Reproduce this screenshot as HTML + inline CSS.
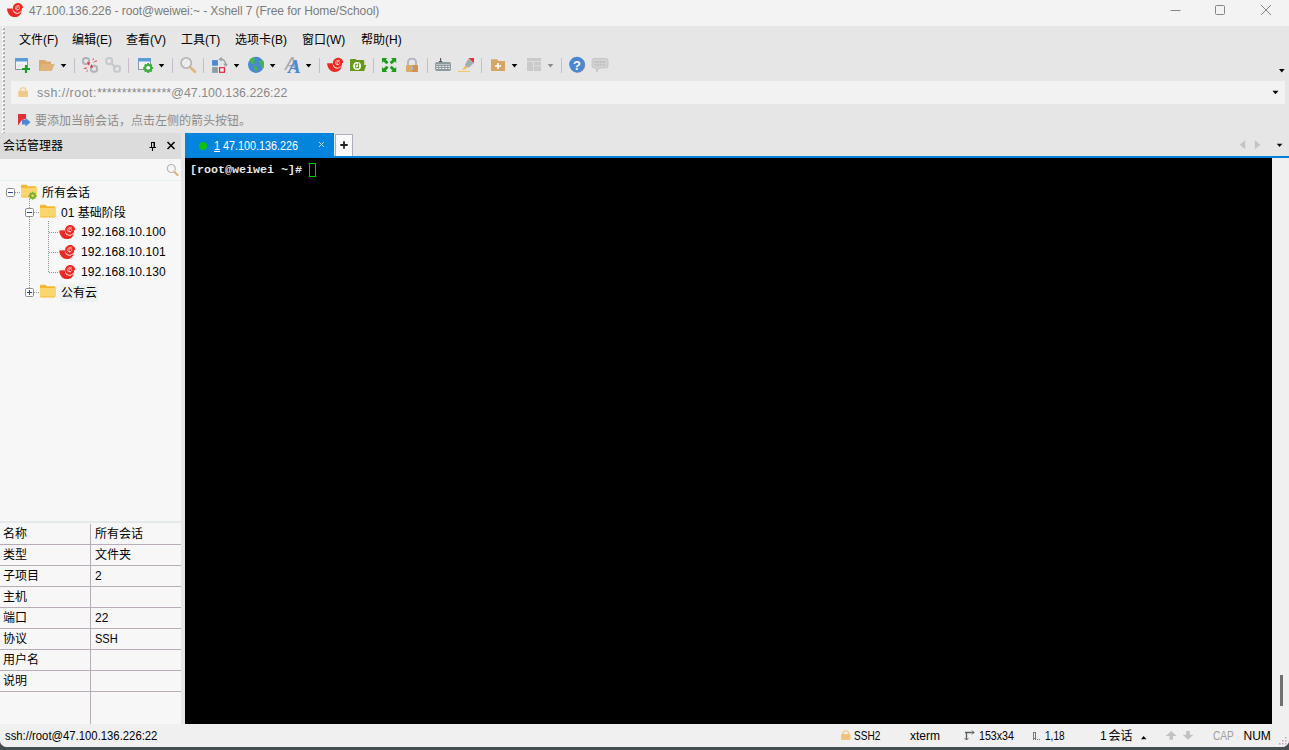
<!DOCTYPE html>
<html lang="zh-CN">
<head>
<meta charset="utf-8">
<title>47.100.136.226 - root@weiwei:~ - Xshell 7 (Free for Home/School)</title>
<style>
*{box-sizing:border-box;margin:0;padding:0}
html,body{width:1289px;height:750px;overflow:hidden;background:#454e53;}
body{font-family:"Liberation Sans","Noto Sans CJK SC",sans-serif;font-size:12px;color:#000;position:relative}
.abs{position:absolute}
#win{position:absolute;left:0;top:0;width:1289px;height:747px;background:#e6e6e6;border-radius:0 0 7px 7px;overflow:hidden}
#title{left:0;top:0;width:1289px;height:26px;background:#f3f3f3}
#title .txt{left:29px;top:3px;font-size:12px;letter-spacing:-0.08px;color:#7c7c7c;line-height:16px;white-space:nowrap}
#menu{left:0;top:26px;width:1289px;height:26px}
#menu span{position:absolute;top:5.500px;line-height:16px;font-size:12px;white-space:nowrap}
#tool{left:0;top:52px;width:1289px;height:28px}
#addr{left:11px;top:81px;width:1274px;height:23px;background:#f2f2f2}
#addr .txt{left:26px;top:4px;font-size:12.4px;color:#8a8a8a;line-height:16px;white-space:nowrap}
#hint{left:0;top:106px;width:1289px;height:27px}
#hint .txt{left:35px;top:7px;font-size:12px;color:#8c8c8c;line-height:16px;white-space:nowrap}
#grip{left:2px;top:27px}
#smhead{left:0;top:133px;width:181px;height:26.400px;background:#dcdcdc}
#smhead .txt{left:3px;top:5px;font-size:12px;line-height:16px}
#left{left:0;top:159px;width:181px;height:565px;background:#f7f7f7}
#split{left:181px;top:133px;width:4px;height:591px;background:#e6e6e6}
#search{left:0;top:159.400px;width:181px;height:22px;background:#f7f7f7;border-bottom:1px dotted #dce8ec}
.tree{position:absolute;white-space:nowrap;font-size:12px;line-height:16px}
#tabs{left:185px;top:133px;width:1104px;height:25px}
#tab1{left:0;top:0;width:149px;height:24px;background:#0584de;color:#fff}
#tab1 .txt{left:28.800px;top:4.500px;font-size:12.600px;line-height:16px;white-space:nowrap;transform-origin:0 50%;transform:scaleX(0.856)}
#plus{left:150px;top:1px;width:18px;height:23px;background:#fafafa;border:1px solid #b4acbc;border-bottom:none}
#tabline{left:185px;top:156px;width:1104px;height:2px;background:#0580d8}
#term{left:185px;top:158px;width:1087px;height:566px;background:#000}
#term .txt{left:5px;top:4px;color:#e8e8e8;font-family:"Liberation Mono","DejaVu Sans Mono",monospace;font-weight:bold;font-size:11.667px;line-height:16px;white-space:pre}
#cursor{left:124px;top:5px;width:7px;height:14px;border:1px solid #00d000}
#vscroll{left:1272px;top:158px;width:17px;height:566px;background:#f0f0f0}
#thumb{left:8px;top:517px;width:2.500px;height:31px;background:#707070}
#props{left:0;top:521px;width:181px;height:203px;background:#f7f7f7;border-top:2.500px solid #e4e9e9}
.prow{position:absolute;left:0;width:181px;height:21px;border-bottom:1px solid #b8acb8}
.prow span{position:absolute;top:2px;line-height:16px;font-size:12px;white-space:nowrap}
#pcol{left:90px;top:524px;width:1px;height:200px;background:#b8acb8}
#status{left:0;top:724px;width:1289px;height:23px;background:#f0f0f0}
#status span{position:absolute;transform-origin:0 50%;top:4px;line-height:16px;font-size:12px;white-space:nowrap}
</style>
</head>
<body>
<svg width="0" height="0" style="position:absolute"><defs>
<g id="logo">
<path d="M0 5.500 L5.700 5.400 C5.400 8.500 7.500 10.900 10.500 10.700 C12.500 10.600 13.800 9.500 14.400 8.300 C14.500 11.500 11.500 14.200 7.800 14.200 C3.200 14.200 0.200 10.200 0 5.500 Z" fill="#ea2a22"/>
<path d="M11 0 C14 0 16.200 2.300 16.100 5.300 L14.900 5.100 C15.200 8 13.300 10.200 10.800 10.200 C8 10.200 5.900 8 5.900 5.100 C5.900 2.300 8.200 0 11 0 Z" fill="#ea2a22"/>
<path d="M11.300 6.700 A1.500 1.500 0 1 1 12.600 5.200 A2.300 2.300 0 0 1 8.700 6.300 A2.600 2.600 0 0 1 12.800 3.200" fill="none" stroke="#fff" stroke-opacity="0.850" stroke-width="0.700"/>
<path d="M6.200 7.400 C7.200 10.200 11.200 11.200 14 8.400" fill="none" stroke="#fff" stroke-opacity="0.750" stroke-width="0.700"/>
</g></defs></svg>
<div id="win">
  <div id="title" class="abs">
    <svg class="abs" style="left:7px;top:2.800px" width="16" height="14.500" viewBox="0 0 16 14.500"><use href="#logo"/></svg>
    <div class="abs txt">47.100.136.226 - root@weiwei:~ - Xshell 7 (Free for Home/School)</div>
    <svg class="abs" style="left:1160px;top:0" width="129" height="26" viewBox="0 0 129 26">
      <path d="M10.500 10.500 H20.500" stroke="#858585" stroke-width="1" fill="none"/>
      <rect x="55.500" y="5.500" width="9" height="9" rx="1" stroke="#858585" stroke-width="1" fill="none"/>
      <path d="M101 5 L111 15 M111 5 L101 15" stroke="#858585" stroke-width="1" fill="none"/>
    </svg>
  </div>
  <div id="menu" class="abs">
    <span style="left:19px">文件(F)</span>
    <span style="left:72px">编辑(E)</span>
    <span style="left:126px">查看(V)</span>
    <span style="left:181px">工具(T)</span>
    <span style="left:235px">选项卡(B)</span>
    <span style="left:302px">窗口(W)</span>
    <span style="left:361px">帮助(H)</span>
  </div>
  <svg id="grip" class="abs" width="4" height="106" viewBox="0 0 4 106"><defs><pattern id="gp" width="4" height="4" patternUnits="userSpaceOnUse"><rect x="0" y="0" width="2" height="2" fill="#fff"/><rect x="1" y="1" width="2" height="2" fill="#b0b0b0"/></pattern></defs><rect width="4" height="106" fill="url(#gp)"/></svg>
  <div id="tool" class="abs"><svg class="abs" style="left:0;top:0" width="1289" height="28" viewBox="0 52 1289 28">
<defs>
<path id="dd" d="M0 0 H5.600 L2.800 3.400 Z"/>
<path id="sep" d="M0.500 58 V73" stroke="#c6bcca" stroke-width="1" fill="none"/>
</defs>
<!-- new session -->
<rect x="15.500" y="58.500" width="12" height="11" fill="#f2f2f2" stroke="#8a96a2"/>
<rect x="15" y="58" width="13" height="3.500" fill="#5b9bd8"/>
<path d="M18 67 L20 64 M21 67 L23 64" stroke="#d0d0d0" stroke-width="0.800"/>
<path d="M26 65 V73 M22 69 H30" stroke="#18a020" stroke-width="2.200" fill="none"/>
<!-- open folder -->
<path d="M39 60 H45 L46.500 61.500 H51 V64 H54.500 L51.500 71 H39 Z" fill="#d9aa6c"/>
<path d="M39 71 L42 64 H54.500 L51.500 71 Z" fill="#dfb47a"/>
<use href="#dd" x="60.700" y="64" fill="#000"/>
<use href="#sep" x="74"/>
<!-- disconnect -->
<g fill="none" stroke="#a4a8ae" stroke-width="2" stroke-opacity="0.850">
<rect x="83" y="58" width="6" height="6" rx="2.500"/>
<rect x="91" y="65.800" width="6" height="6" rx="2.500"/>
</g>
<g fill="#e53a44">
<path d="M86.800 62 L90 62.300 L89 66 Z"/><path d="M90 67.600 L91.500 64 L93.200 67.800 Z"/>
<path d="M92 60.500 L93.500 57.800 L94 59.500 Z" opacity="0.850"/><path d="M92.500 62.800 L96.500 60 L97 61.500 Z" opacity="0.850"/>
<path d="M83 68.500 L87.300 67 L86 69.300 Z" opacity="0.850"/><path d="M86 71.800 L88 69.200 L87.500 71.500 Z" opacity="0.850"/>
</g>
<!-- connect disabled -->
<g fill="none" stroke="#c6c9cc" stroke-width="2">
<rect x="106.200" y="58" width="6" height="6" rx="2.500"/>
<rect x="114" y="65.800" width="6" height="6" rx="2.500"/>
<path d="M110.500 62.500 L116 68" stroke-width="2.400"/>
</g>
<use href="#sep" x="128"/>
<!-- session properties -->
<rect x="138.500" y="58.500" width="12" height="11" fill="#f2f2f2" stroke="#8a96a2"/>
<rect x="138" y="58" width="13" height="3.500" fill="#5b9bd8"/>
<g transform="translate(148.200 68)">
<circle r="3" fill="none" stroke="#3cae3c" stroke-width="2"/>
<g stroke="#3cae3c" stroke-width="2"><path d="M0 -5 V-3 M0 3 V5 M-5 0 H-3 M3 0 H5 M-3.500 -3.500 L-2.200 -2.200 M3.500 3.500 L2.200 2.200 M-3.500 3.500 L-2.200 2.200 M3.500 -3.500 L2.200 -2.200"/></g>
<circle r="1.600" fill="#f4f4f4"/>
</g>
<use href="#dd" x="158.700" y="64" fill="#000"/>
<use href="#sep" x="172"/>
<!-- magnifier -->
<path d="M191 68 L195 71.800" stroke="#e4b476" stroke-width="2.600" stroke-linecap="round"/>
<circle cx="186.200" cy="63" r="5.100" fill="#efefef" stroke="#b6b6b6" stroke-width="1.800"/>
<path d="M184 65.500 L187.500 60" stroke="#dcdcdc" stroke-width="0.800"/>
<use href="#sep" x="203"/>
<!-- layout -->
<rect x="212.100" y="60.100" width="5.800" height="5.600" fill="#4a88d4"/>
<rect x="212.100" y="67.100" width="5.800" height="5.800" fill="#909ca4"/>
<rect x="219.600" y="67.700" width="4.800" height="4.600" fill="#ececec" stroke="#e0283c" stroke-width="1.200"/>
<path d="M220.500 59.300 C223.500 59 225.500 61 225.600 64.500" fill="none" stroke="#98a4a8" stroke-width="1.400"/>
<path d="M223 63.800 H228 L225.600 66.700 Z" fill="#98a4a8"/>
<path d="M218.300 59.300 L221.800 57 L221.800 61.600 Z" fill="#98a4a8"/>
<use href="#dd" x="233.700" y="64" fill="#000"/>
<!-- globe -->
<circle cx="256.050" cy="64.850" r="8.050" fill="#4a88d4"/>
<path d="M249.800 59.500 C251 57.800 254 57.300 255.300 58 C255.800 59.500 253.800 60.500 254.500 62.500 C255 63.800 254 65 252.800 64.300 C251 63.300 249.800 61.500 249.800 59.500 Z" fill="#44b450"/>
<path d="M253.500 66 C255.500 65.500 258 66.800 257.600 68.500 C257.200 70.300 256.300 72 255.300 71.300 C254.500 70.500 255 69 254 68 C253.300 67.300 253 66.500 253.500 66 Z" fill="#44b450"/>
<path d="M258.800 61.300 C260 60 262.500 59.800 263.300 60.800 C264.200 62.500 264.300 65.500 263.300 67.300 C262.500 68.800 261.300 68.300 261.200 66.800 C261 65 260.500 64.500 259.500 63.500 C258.800 62.800 258.300 62 258.800 61.300 Z" fill="#44b450"/>
<use href="#dd" x="269.800" y="64" fill="#000"/>
<!-- font -->
<text x="285" y="69.800" font-family="Liberation Sans,sans-serif" font-style="italic" font-size="17.700" fill="#a4a8ac">A</text>
<text x="288" y="72.900" font-family="Liberation Serif,serif" font-style="italic" font-weight="bold" font-size="19" fill="#4a88d4">A</text>
<use href="#dd" x="305.800" y="64" fill="#000"/>
<use href="#sep" x="319"/>
<!-- xshell logo -->
<use href="#logo" x="327.100" y="57.800"/>
<!-- xftp folder -->
<path d="M350 59.800 Q350 59 350.800 59 H355.500 L356.800 60 H363.500 Q364.200 60 364.200 60.800 V65 H366.300 L364.200 71 H350 Z" fill="#67981a"/>
<circle cx="357.100" cy="65.900" r="3.900" fill="#fff"/>
<path d="M355.800 68.500 V64.200 H357.600 M358.600 63.300 V67.600 H356.800" fill="none" stroke="#67981a" stroke-width="1.100"/>
<use href="#sep" x="373"/>
<!-- fullscreen -->
<g fill="#1c9a1e">
<path d="M382 58 H387.200 L385.700 59.500 L388.500 62.300 L386.500 64.300 L383.500 61.500 L382 63 Z"/>
<path d="M396.200 58 H391 L392.500 59.500 L389.700 62.300 L391.700 64.300 L394.700 61.500 L396.200 63 Z"/>
<path d="M382 72 H387.200 L385.700 70.500 L388.500 67.700 L386.500 65.700 L383.500 68.500 L382 67 Z"/>
<path d="M396.200 72 H391 L392.500 70.500 L389.700 67.700 L391.700 65.700 L394.700 68.500 L396.200 67 Z"/>
</g>
<!-- lock -->
<path d="M408 65.500 V62.500 C408 57.300 416 57.300 416 62.500 V65.500" fill="none" stroke="#b0b4c4" stroke-width="1.900"/>
<rect x="406" y="64.900" width="12" height="7.100" rx="1" fill="#dba968"/>
<path d="M412 64.900 H417 Q418 64.900 418 65.900 V71 Q418 72 417 72 H412 Z" fill="#d0924c"/>
<rect x="411" y="66" width="2" height="4" fill="#a8b8d0"/>
<use href="#sep" x="427"/>
<!-- keyboard -->
<path d="M440.600 58 V62 M439 61.600 H442.200" stroke="#505458" stroke-width="1.100"/>
<rect x="435.100" y="62.100" width="15.900" height="8.900" rx="1.800" fill="#8a9a9e"/>
<path d="M436.500 64.500 H450" stroke="#f2e6e6" stroke-width="1" stroke-dasharray="1 1"/>
<path d="M436.200 66.500 H450.500 M436.200 68.500 H450.500" stroke="#f2e6e6" stroke-width="1" stroke-dasharray="2 1"/>
<!-- highlighter -->
<path d="M458 71.500 H470" stroke="#f0c868" stroke-width="1.100"/>
<path d="M465.300 65.200 L468 67.300 L465 69.600 L462 69.800 Z" fill="#f0c060"/>
<path d="M468.500 58.500 L473.600 63.300 L469 67.600 L465.800 66.200 L465 64.500 Z" fill="#a4acb4"/>
<path d="M468.500 58 H474 V63.200 Z" fill="#e0303a"/>
<use href="#sep" x="481"/>
<!-- folder plus -->
<path d="M491 59.300 H497 L498.500 61 H505 V71 H491 Z" fill="#d9a564"/>
<path d="M498 63 V69 M495 66 H501" stroke="#fff" stroke-width="1.700"/>
<use href="#dd" x="511.700" y="64" fill="#000"/>
<!-- disabled layout -->
<rect x="527" y="58" width="14" height="13" fill="#cacaca"/>
<path d="M527 61.500 H541 M533.500 61.500 V71 M533.500 66 H541" stroke="#dedede" stroke-width="1"/>
<use href="#dd" x="547.700" y="64" fill="#8c8890"/>
<use href="#sep" x="561"/>
<!-- help -->
<circle cx="577.600" cy="65.200" r="7.600" fill="#9098a8"/>
<circle cx="577" cy="64.600" r="7.800" fill="#4a86d2"/>
<text x="577" y="69.500" text-anchor="middle" font-family="Liberation Sans,sans-serif" font-weight="bold" font-size="13" fill="#fff">?</text>
<!-- chat -->
<path d="M594 58.500 H606 Q608 58.500 608 60.500 V66 Q608 68 606 68 H599.500 L596.500 72 V68 H594 Q592 68 592 66 V60.500 Q592 58.500 594 58.500 Z" fill="#d2d2d2" stroke="#c0c0c0" stroke-width="0.800"/>
<path d="M594.500 62 H605.500 M594.500 64.800 H605.500" stroke="#bcbcbc" stroke-width="1.300" stroke-dasharray="2 0.800"/>
<!-- overflow -->
<path d="M1279 69 H1284.600 L1281.800 72.400 Z" fill="#000"/>
</svg>
</div>
  <div id="addr" class="abs">
<svg class="abs" style="left:0;top:0" width="1274" height="23" viewBox="11 81 1274 23">
<path d="M20.300 92 V90.500 C20.300 86.800 25.900 86.800 25.900 90.500 V92" fill="none" stroke="#f0d498" stroke-width="1.500"/>
<rect x="18.200" y="90.800" width="9.800" height="6.200" rx="1" fill="#f0cc88"/>
<path d="M20.300 93 H21.500 M22.500 94.500 H23.700 M24.700 93 H25.900" stroke="#e8b0a0" stroke-width="1"/>
<path d="M1272.500 90.800 H1278.500 L1275.500 94.200 Z" fill="#000"/>
</svg>
    <div class="abs txt"><span style="letter-spacing:0.500px">ssh://root:</span><span style="letter-spacing:0.140px">***************</span><span>@47.100.136.226:22</span></div>
  </div>
  <div id="hint" class="abs">
<svg class="abs" style="left:0;top:0" width="40" height="27" viewBox="0 106 40 27">
<path d="M18 114 H26 V119 L22 120 L18 125.500 Z" fill="#e0303c"/>
<path d="M22 120 H25.500 V117.800 L30.500 122.200 L25.500 126.600 V124.400 H22 Z" fill="#4a88d4"/>
</svg>
    <div class="abs txt">要添加当前会话，点击左侧的箭头按钮。</div>
  </div>
  <div id="smhead" class="abs">
<svg class="abs" style="left:0;top:0" width="182" height="24" viewBox="0 133 182 24">
<path d="M151 142.500 H155 M151.500 142.500 V147 M154.500 142 V147.500" stroke="#000" stroke-width="1" fill="none"/><path d="M153.500 142 H155 V147 H153.500 Z" fill="#000"/><path d="M149.500 147.500 H156 M152.500 148 V151" stroke="#000" stroke-width="1.100" fill="none"/>
<path d="M167.500 142 L174.500 149 M174.500 142 L167.500 149" stroke="#000" stroke-width="1.500" fill="none"/>
</svg><div class="abs txt">会话管理器</div></div>
  <div id="left" class="abs"></div>
  <div id="search" class="abs"><svg class="abs" style="left:166px;top:3.600px" width="14" height="14" viewBox="0 0 14 14"><path d="M7.500 8 L11.500 12" stroke="#e0b070" stroke-width="2" stroke-linecap="round"/><circle cx="5.300" cy="5.500" r="4" fill="#f4f4f4" stroke="#b8b8b8" stroke-width="1.200"/></svg></div>
  <div id="tree"><svg class="abs" style="left:0;top:182px" width="182" height="120" viewBox="0 182 182 120">
<defs>
<g id="fold"><path d="M0 2.700 Q0 1.500 1.200 1.500 H5.500 L7 3 H14.300 Q15.500 3 15.500 4.200 V12.800 Q15.500 14 14.300 14 H1.200 Q0 14 0 12.800 Z" fill="#f2b830"/><path d="M0 4.800 H15.500 V12.800 Q15.500 14 14.300 14 H1.200 Q0 14 0 12.800 Z" fill="#fbd56e"/><path d="M0.500 13.500 H15" stroke="#f4c44c" stroke-width="1" fill="none"/></g>
<g id="xs"><use href="#logo"/></g>
<g id="bx"><rect x="0.500" y="0.500" width="8" height="8" rx="1.300" fill="#fff" stroke="#8e8e92"/><path d="M2 4.500 H7" stroke="#3040a0" stroke-width="1"/></g>
</defs>
<g stroke="#909090" stroke-width="1" stroke-dasharray="1 1" fill="none">
<path d="M15 192.500 H21"/><path d="M29.500 199 V292"/><path d="M34 212.500 H40"/><path d="M34 292.500 H40"/>
<path d="M48.500 221 V272"/><path d="M49 232.500 H59"/><path d="M49 252.500 H59"/><path d="M49 272.500 H59"/>
</g>
<use href="#bx" x="6" y="188"/>
<use href="#bx" x="25" y="208"/>
<use href="#bx" x="25" y="288"/><path d="M29.500 290 V295" stroke="#3040a0" stroke-width="1"/>
<use href="#fold" x="21" y="183.300"/>
<g transform="translate(32.600 195.700)"><circle r="2.300" fill="none" stroke="#78b232" stroke-width="1.800"/><path d="M0 -4 V4 M-4 0 H4 M-2.800 -2.800 L2.800 2.800 M-2.800 2.800 L2.800 -2.800" stroke="#78b232" stroke-width="1.400"/><circle r="1.200" fill="#fbd968"/></g>
<use href="#fold" x="40" y="203.300"/>
<use href="#fold" x="40" y="283.300"/>
<use href="#xs" x="59.200" y="224.900"/>
<use href="#xs" x="59.200" y="244.900"/>
<use href="#xs" x="59.200" y="264.900"/>
</svg>
<div class="tree" style="left:42px;top:184.5px">所有会话</div>
<div class="tree" style="left:61px;top:204.5px">01 基础阶段</div>
<div class="tree" style="left:81px;top:223.5px;letter-spacing:0.100px">192.168.10.100</div>
<div class="tree" style="left:81px;top:243.5px;letter-spacing:0.100px">192.168.10.101</div>
<div class="tree" style="left:81px;top:263.5px;letter-spacing:0.100px">192.168.10.130</div>
<div class="abs" style="left:60px;top:284px;width:38px;height:18px;background:#eef1f1"></div><div class="tree" style="left:61px;top:284.5px">公有云</div></div>
  <div id="props" class="abs"></div>
  <div id="proprows"><div class="prow" style="top:524px"><span style="left:3px">名称</span><span style="left:95px">所有会话</span></div>
<div class="prow" style="top:545px"><span style="left:3px">类型</span><span style="left:95px">文件夹</span></div>
<div class="prow" style="top:566px"><span style="left:3px">子项目</span><span style="left:95px">2</span></div>
<div class="prow" style="top:587px"><span style="left:3px">主机</span><span style="left:95px"></span></div>
<div class="prow" style="top:608px"><span style="left:3px">端口</span><span style="left:95px">22</span></div>
<div class="prow" style="top:629px"><span style="left:3px">协议</span><span style="left:95px;transform:scaleX(0.920);transform-origin:0 50%">SSH</span></div>
<div class="prow" style="top:650px"><span style="left:3px">用户名</span><span style="left:95px"></span></div>
<div class="prow" style="top:671px"><span style="left:3px">说明</span><span style="left:95px"></span></div></div>
  <div id="pcol" class="abs"></div>
  <div id="split" class="abs"></div>
  <div id="tabs" class="abs">
<svg class="abs" style="left:1050px;top:0" width="54" height="25" viewBox="1235 133 54 25">
<path d="M1245.200 140.200 V149.200 L1239.700 144.700 Z" fill="#c4c4c4"/>
<path d="M1254.900 140.200 V149.200 L1260.400 144.700 Z" fill="#c4c4c4"/>
<path d="M1276.800 143.700 H1282.400 L1279.600 147 Z" fill="#000"/>
</svg>
    <div id="tab1" class="abs">
      <div class="abs" style="left:14px;top:9px;width:8px;height:8px;border-radius:4px;background:#10c010"></div>
      <div class="abs txt"><u>1</u> 47.100.136.226</div>
      <svg class="abs" style="left:133px;top:8px" width="7" height="7" viewBox="0 0 7 7"><path d="M1 1 L6 6 M6 1 L1 6" stroke="#b8dcf8" stroke-width="1"/></svg>
    </div>
    <div id="plus" class="abs"><svg class="abs" style="left:4px;top:6px" width="8" height="8" viewBox="0 0 8 8"><path d="M4 0.300 V7.700 M0.300 4 H7.700" stroke="#222" stroke-width="1.800"/></svg></div>
  </div>
  <div id="tabline" class="abs"></div>
  <div id="term" class="abs">
    <div class="abs txt">[root@weiwei ~]# </div>
    <div id="cursor" class="abs"></div>
  </div>
  <div id="vscroll" class="abs"><div id="thumb" class="abs"></div></div>
  <div id="status" class="abs">
<svg class="abs" style="left:0;top:0" width="1289" height="23" viewBox="0 724 1289 23">
<path d="M842.800 735 V733.500 C842.800 730 848.600 730 848.600 733.500 V735" fill="none" stroke="#f0cc90" stroke-width="1.400"/>
<rect x="841" y="734" width="9.500" height="6" rx="1" fill="#f2c67c"/>
<path d="M843 736 H844.200 M845.200 737.500 H846.400 M847.400 736 H848.600" stroke="#e8a8a0" stroke-width="1"/>
<g stroke="#586064" stroke-width="1.300" fill="none"><path d="M966.500 732 V740 M965 732.500 H974"/><path d="M964.500 738 L966.500 740 L968.500 738 M972 730.500 L974 732.500 L972 734.500" stroke-width="0.900"/></g>
<g stroke="#70787c" stroke-width="1" fill="none"><rect x="1033.500" y="732.500" width="2" height="6"/><path d="M1033 739.500 H1041" stroke-dasharray="1 1"/></g>
<path d="M1141 739.200 L1143.700 736 L1146.400 739.200 Z" fill="#000"/>
<path d="M1171.200 731 L1176.600 736 H1173 V739.700 H1169.400 V736 H1165.800 Z" fill="#c2c2c2"/>
<path d="M1188 739.700 L1193.400 734.700 H1189.800 V731 H1186.200 V734.700 H1182.600 Z" fill="#c2c2c2"/>
<g fill="#b8a8c0"><rect x="1285" y="737" width="1.500" height="1.500"/><rect x="1282" y="740" width="1.500" height="1.500"/><rect x="1285" y="740" width="1.500" height="1.500"/><rect x="1279" y="743" width="1.500" height="1.500"/><rect x="1282" y="743" width="1.500" height="1.500"/><rect x="1285" y="743" width="1.500" height="1.500"/></g>
</svg>
    <span style="left:5px;transform:scaleX(0.943)">ssh://root@47.100.136.226:22</span>
    <span style="left:854.200px;transform:scaleX(0.841)">SSH2</span>
    <span style="left:910px">xterm</span>
    <span style="left:979px;transform:scaleX(0.888)">153x34</span>
    <span style="left:1045px;transform:scaleX(0.838)">1,18</span>
    <span style="left:1100px;word-spacing:-1.500px">1 会话</span>
    <span style="left:1212.700px;color:#a0a0a0;transform:scaleX(0.846)">CAP</span>
    <span style="left:1243.500px">NUM</span>
  </div>
</div>
</body>
</html>
